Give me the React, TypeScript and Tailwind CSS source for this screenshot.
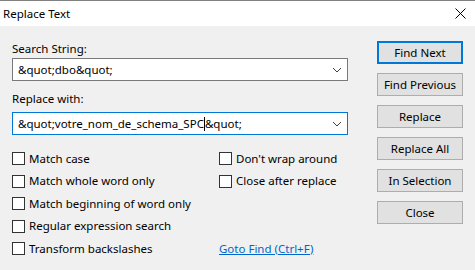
import React from 'react';

const FONT = { fontFamily: '"Segoe UI", "Noto Sans", "Liberation Sans", sans-serif' };

function Chevron() {
  return (
    <svg width="10" height="6" viewBox="0 0 10 6" className="shrink-0">
      <path d="M1 1 L5 5 L9 1" fill="none" stroke="#404040" strokeWidth="1" />
    </svg>
  );
}

function Combo({ focused, children }: { focused?: boolean; children: React.ReactNode }) {
  return (
    <div
      className={`flex items-center h-[23px] bg-white border pl-[5px] pr-[5px] ${
        focused ? 'border-[#0078d7]' : 'border-[#7a7a7a]'
      }`}
    >
      <div className="flex-1 text-[11.5px] text-black whitespace-nowrap overflow-hidden leading-[16px]">
        {children}
      </div>
      <Chevron />
    </div>
  );
}

function Check({ label }: { label: string }) {
  return (
    <div className="flex items-center h-[13px] gap-[4px]">
      <span className="w-[13px] h-[13px] border border-[#333333] bg-white shrink-0" />
      <span className="text-[11.5px] text-black leading-[16px] whitespace-nowrap">{label}</span>
    </div>
  );
}

function Btn({ label, primary }: { label: string; primary?: boolean }) {
  return (
    <div
      className={`h-[23px] w-[86px] flex items-center justify-center bg-[#e1e1e1] text-[11.5px] text-black ${
        primary ? 'border-2 border-[#0078d7]' : 'border border-[#adadad]'
      }`}
    >
      {label}
    </div>
  );
}

export default function App() {
  return (
    <div className="w-[475px] h-[270px] bg-[#f0f0f0] overflow-hidden" style={FONT}>
      {/* title bar */}
      <div className="h-[26px] bg-white border-t border-[#808080] flex items-center justify-between pl-[3px] pr-[9px]">
        <span className="text-[11.5px] text-black">Replace Text</span>
        <svg width="11" height="11" viewBox="0 0 11 11">
          <path d="M0.5 0.5 L10.5 10.5 M10.5 0.5 L0.5 10.5" stroke="#000" strokeWidth="1" />
        </svg>
      </div>

      <div className="flex pl-[12px] pt-[15px]">
        <div className="w-[336px] flex flex-col">
          <div className="text-[11.5px] text-black leading-[16px] h-[17px]">Search String:</div>
          <Combo>&amp;quot;dbo&amp;quot;</Combo>
          <div className="mt-[10px] text-[11.5px] text-black leading-[16px] h-[21px]">Replace with:</div>
          <Combo focused>
            &amp;quot;votre_nom_de_schema_SPC
            <span className="inline-block w-px h-[14px] bg-black align-middle" />
            &amp;quot;
          </Combo>

          <div className="flex mt-[17px]">
            <div className="w-[207px] flex flex-col gap-[9.5px]">
              <Check label="Match case" />
              <Check label="Match whole word only" />
              <Check label="Match beginning of word only" />
              <Check label="Regular expression search" />
              <Check label="Transform backslashes" />
            </div>
            <div className="flex flex-col gap-[9.5px]">
              <Check label="Don't wrap around" />
              <Check label="Close after replace" />
              <div className="h-[13px]" />
              <div className="h-[13px]" />
              <div className="h-[13px] flex items-center">
                <span className="text-[11.5px] text-[#0066cc] underline leading-[16px] whitespace-nowrap">
                  Goto Find (Ctrl+F)
                </span>
              </div>
            </div>
          </div>
        </div>

        <div className="ml-[29px] flex flex-col gap-[9px]">
          <Btn label="Find Next" primary />
          <Btn label="Find Previous" />
          <Btn label="Replace" />
          <Btn label="Replace All" />
          <Btn label="In Selection" />
          <Btn label="Close" />
        </div>
      </div>
    </div>
  );
}
